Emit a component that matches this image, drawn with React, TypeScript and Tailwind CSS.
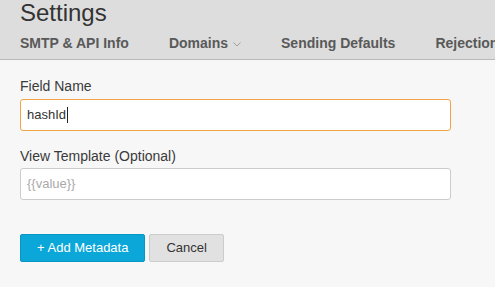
import React from "react";

export default function App() {
  const font = { fontFamily: '"Liberation Sans", Arial, sans-serif' };
  return (
    <div className="w-[495px] h-[287px] overflow-hidden bg-[#f7f7f7]" style={font}>
      <div className="h-[60px] bg-[#dddddd] border-b border-[#b9b9b9] pl-[20px] overflow-hidden">
        <div className="text-[24px] leading-[25px] text-[#333333]">Settings</div>
        <div className="mt-[8px] flex items-center gap-[40px] whitespace-nowrap text-[14px] leading-[20px] font-bold text-[#595959]">
          <span>SMTP &amp; API Info</span>
          <span className="flex items-center">
            Domains
            <svg width="8" height="5" viewBox="0 0 8 5" className="ml-[5px] mt-[2px]">
              <polyline points="0.5,0.5 4,4 7.5,0.5" fill="none" stroke="#a0a0a0" strokeWidth="1" />
            </svg>
          </span>
          <span>Sending Defaults</span>
          <span>Rejection Lists</span>
        </div>
      </div>
      <div className="px-[20px] pt-[16px] w-[471px]">
        <div className="text-[14px] leading-[20px] text-[#3a3a3a] mb-[3px]">Field Name</div>
        <div className="h-[32px] bg-white border border-[#f0a443] rounded-[3px] flex items-center px-[6px] text-[13px] text-[#333]">
          <span>hashId</span>
          <span className="inline-block w-[1px] h-[16px] bg-[#222] ml-[1px]" />
        </div>
        <div className="mt-[15px] text-[14px] leading-[20px] text-[#3a3a3a] mb-[2px]">View Template (Optional)</div>
        <div className="h-[32px] bg-white border border-[#cccccc] rounded-[3px] flex items-center px-[6px] text-[13px] text-[#aaaaaa]">
          {"{{value}}"}
        </div>
        <div className="mt-[34px] flex gap-[4px]">
          <button className="h-[28px] px-[16px] bg-[#0aa7d8] border border-[#0896c2] rounded-[2px] text-white text-[13px]">
            + Add Metadata
          </button>
          <button className="h-[28px] px-[16px] bg-[#e1e1e1] border border-[#cccccc] rounded-[2px] text-[#333] text-[13px]">
            Cancel
          </button>
        </div>
      </div>
    </div>
  );
}
